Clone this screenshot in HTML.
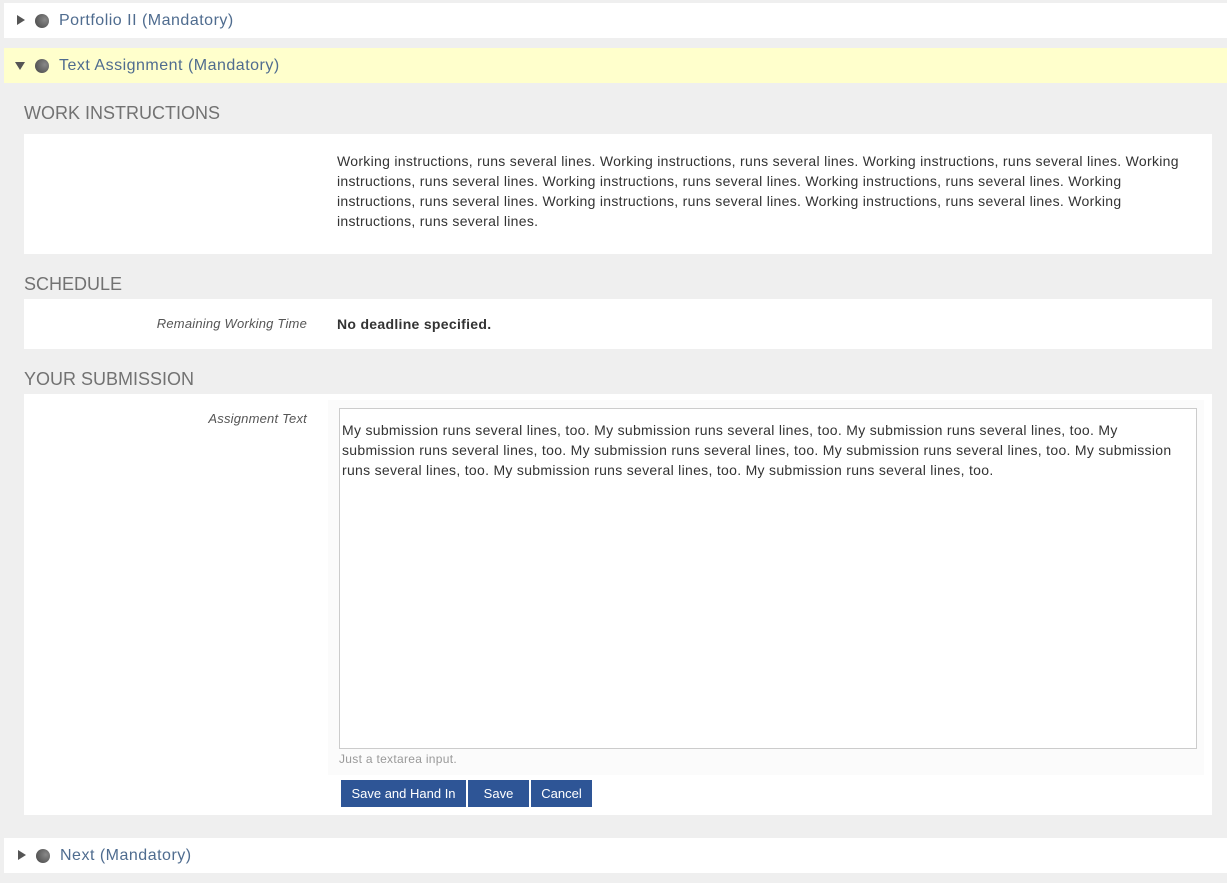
<!DOCTYPE html>
<html><head><style>
body{margin:0;background:#efefef;font-family:"Liberation Sans",sans-serif;width:1227px;height:883px;position:relative;overflow:hidden}
.row{position:absolute;left:4px;right:0;height:35px;background:#fff}
.row .t{position:absolute;left:55px;top:9px;font-size:16px;color:#4f6c8f;letter-spacing:0.5px}
.row .dot{position:absolute;left:31px;top:11px;width:14px;height:14px;border-radius:50%;background:radial-gradient(circle at 70% 40%,#888,#444)}
.tri{position:absolute;left:13px;top:12px;width:0;height:0}
h2{position:absolute;left:24px;margin:0;font-weight:normal;font-size:18px;color:#727272}
.box{position:absolute;left:24px;width:1188px;background:#fff}
.p{font-size:14px;line-height:20px;color:#333;letter-spacing:0.3px}
.lab{position:absolute;font-size:13px;font-style:italic;color:#555;text-align:right;letter-spacing:0.2px}
.btn{position:absolute;top:780px;height:27px;background:#2e5596;color:#fff;font-size:13px;line-height:27px;text-align:center}
</style></head><body>
<div class="row" style="top:3px"><div class="tri" style="border-left:8px solid #555;border-top:5px solid transparent;border-bottom:5px solid transparent"></div><div class="dot"></div><div class="t">Portfolio II (Mandatory)</div></div>
<div class="row" style="top:48px;background:#ffffcc"><div class="tri" style="left:11px;top:14px;border-top:8px solid #555;border-left:5px solid transparent;border-right:5px solid transparent"></div><div class="dot"></div><div class="t">Text Assignment (Mandatory)</div></div>
<h2 style="top:103px">WORK INSTRUCTIONS</h2>
<div class="box" style="top:134px;height:120px"><div class="p" style="position:absolute;left:313px;top:17px;width:850px">Working instructions, runs several lines. Working instructions, runs several lines. Working instructions, runs several lines. Working instructions, runs several lines. Working instructions, runs several lines. Working instructions, runs several lines. Working instructions, runs several lines. Working instructions, runs several lines. Working instructions, runs several lines. Working instructions, runs several lines.</div></div>
<h2 style="top:274px">SCHEDULE</h2>
<div class="box" style="top:299px;height:50px"></div>
<div class="lab" style="top:316px;right:920px">Remaining Working Time</div>
<div class="p" style="position:absolute;left:337px;top:314px;font-weight:bold">No deadline specified.</div>
<h2 style="top:369px">YOUR SUBMISSION</h2>
<div class="box" style="top:394px;height:421px"></div>
<div style="position:absolute;left:328px;top:400px;width:876px;height:375px;background:#fbfbfb"></div>
<div class="lab" style="top:411px;right:920px">Assignment Text</div>
<div style="position:absolute;left:339px;top:408px;width:856px;height:339px;border:1px solid #ccc;background:#fff"><div class="p" style="padding:11px 2px 0 2px;width:835px">My submission runs several lines, too. My submission runs several lines, too. My submission runs several lines, too. My submission runs several lines, too. My submission runs several lines, too. My submission runs several lines, too. My submission runs several lines, too. My submission runs several lines, too. My submission runs several lines, too.</div></div>
<div style="position:absolute;left:339px;top:752px;font-size:12px;color:#999;letter-spacing:0.3px">Just a textarea input.</div>
<div class="btn" style="left:341px;width:125px">Save and Hand In</div>
<div class="btn" style="left:468px;width:61px">Save</div>
<div class="btn" style="left:531px;width:61px">Cancel</div>
<div class="row" style="top:838px"><div class="tri" style="left:14px;border-left:8px solid #555;border-top:5px solid transparent;border-bottom:5px solid transparent"></div><div class="dot" style="left:32px"></div><div class="t" style="left:56px">Next (Mandatory)</div></div>
</body></html>
